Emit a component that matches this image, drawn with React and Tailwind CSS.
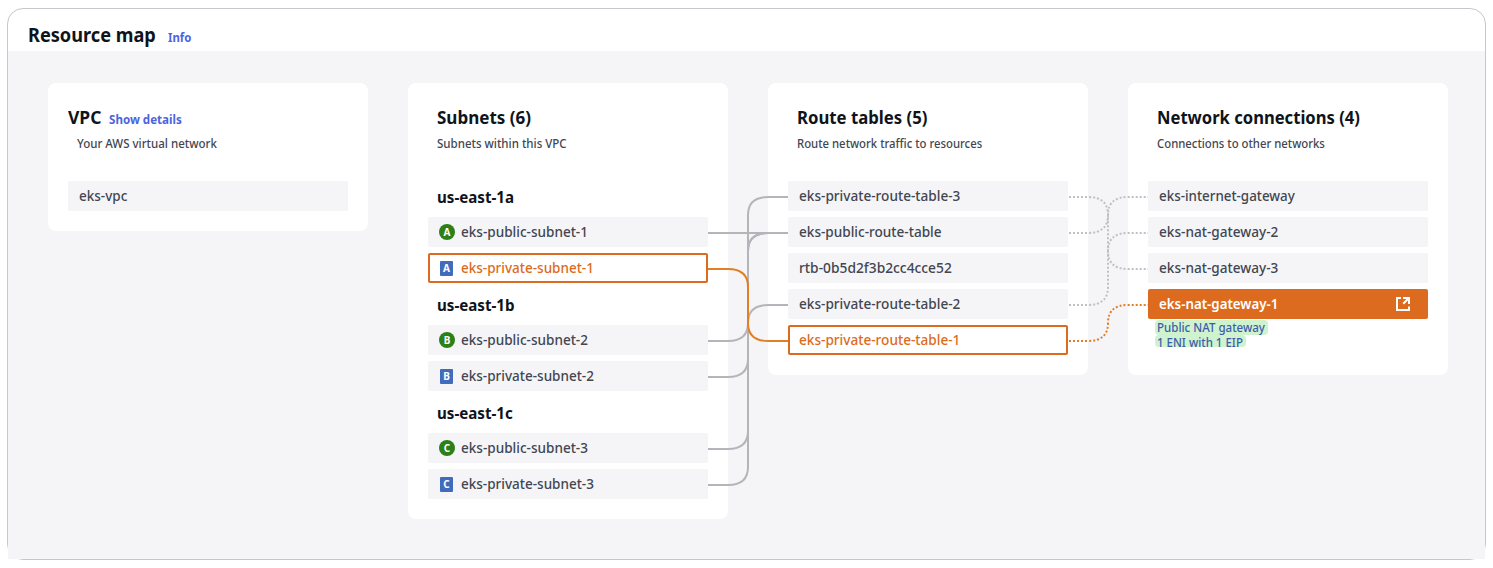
import React from "react";

const GRAY_TEXT = "text-[#424650]";

function Card({ className, title, titleClass, link, subtitle, subtitleClass, children }) {
  return (
    <section className={`w-80 shrink-0 rounded-lg bg-white px-5 pb-5 ${className || ""}`}>
      <div className={`h-[98px] pt-[22px] ${link ? "" : "pl-[9px]"}`}>
        <div className="flex h-6 items-baseline whitespace-nowrap">
          <h2 className={`origin-left text-lg leading-6 font-bold text-[#0f141a] ${titleClass}`}>{title}</h2>
          {link && (
            <a className="ml-[7px] origin-left scale-x-[.965] text-xs leading-4 font-bold text-[#4d63e0]">{link}</a>
          )}
        </div>
        <p className={`mt-[7px] w-max origin-left text-xs leading-4 font-medium whitespace-nowrap text-[#424650] ${link ? "ml-[9px]" : ""} ${subtitleClass}`}>
          {subtitle}
        </p>
      </div>
      {children}
    </section>
  );
}

function Row({ label, width, active, filled, badge, letter }) {
  const look = filled
    ? "bg-[#dc6b20] text-white font-semibold"
    : active
      ? "bg-white text-[#dc6b20] font-medium inset-ring-2 inset-ring-[#dc6b20]"
      : `bg-[#f5f5f8] font-medium ${GRAY_TEXT}`;
  return (
    <li className={`mb-[6px] flex h-[30px] items-center rounded-xs pr-[17px] pl-[11px] last:mb-0 ${look}`}>
      {badge && (
        <span className="mr-[6px] flex w-4 justify-center">
          <span
            className={
              badge === "public"
                ? "flex size-4 items-center justify-center rounded-full bg-[#2c8017] text-[10px] leading-none font-bold text-white"
                : "-ml-px flex h-[15px] w-[13px] items-center justify-center rounded-[1px] bg-[#416bbb] text-[10px] leading-none font-bold text-white"
            }
          >
            {letter}
          </span>
        </span>
      )}
      <span className={`origin-left text-sm leading-[30px] whitespace-nowrap ${width}`}>{label}</span>
      {filled && (
        <svg className="ml-auto size-4" viewBox="0 0 16 16" fill="none" stroke="currentColor" strokeWidth="2">
          <path d="M6 2H2v12h12v-3.4" />
          <path d="M8 2h6v6M14 2 8.2 7.8" />
        </svg>
      )}
    </li>
  );
}

function Zone({ name, letter, n, active }) {
  return (
    <>
      <h3 className="h-9 w-max origin-left scale-x-[.945] pl-[9.5px] text-base leading-8 font-bold text-[#0f141a]">{name}</h3>
      <ul className="mb-[6px] last:mb-0">
        <Row label={`eks-public-subnet-${n}`} width="scale-x-[.968]" badge="public" letter={letter} />
        <Row label={`eks-private-subnet-${n}`} width="scale-x-[.965]" badge="private" letter={letter} active={active} />
      </ul>
    </>
  );
}

// Draws an S-shaped connector between two rows, 80px apart
function link(x, from, to) {
  if (from === to) return `M${x} ${from}H${x + 80}`;
  const s = to > from ? 1 : -1;
  const m = x + 40;
  const r = 18;
  return `M${x} ${from}H${m - 20}Q${m} ${from} ${m} ${from + s * r}V${to - s * r}Q${m} ${to} ${m + 20} ${to}H${x + 80}`;
}

const solid = [[233, 233], [341, 233], [377, 305], [449, 233], [485, 197]];
const dotted = [[197, 269], [233, 197], [305, 233]];

export default function App() {
  return (
    <div className="h-[568px] bg-white px-[7px] pt-2 font-['Noto_Sans',sans-serif]">
      <div className="relative h-[552px] rounded-2xl border border-[#c6c6cd]">
        <header className="flex h-[42px] items-baseline pt-[12px] pl-5">
          <h1 className="w-[139.5px] origin-left scale-x-[.908] text-xl leading-7 font-bold whitespace-nowrap text-[#0f141a]">Resource map</h1>
          <a className="origin-left scale-x-[.95] text-xs leading-4 font-bold text-[#4d63e0]">Info</a>
        </header>
        <main className="flex h-[508px] items-start gap-10 bg-[#f5f5f8] px-10 pt-8">
          <Card title="VPC" titleClass="scale-x-[.97]" link="Show details" subtitle="Your AWS virtual network" subtitleClass="scale-x-[.96]">
            <ul>
              <Row label="eks-vpc" width="scale-x-[.965]" />
            </ul>
          </Card>
          <Card title="Subnets (6)" titleClass="scale-x-[.945]" subtitle="Subnets within this VPC" subtitleClass="scale-x-[.96]">
            <Zone name="us-east-1a" letter="A" n="1" active />
            <Zone name="us-east-1b" letter="B" n="2" />
            <Zone name="us-east-1c" letter="C" n="3" />
          </Card>
          <Card className="h-[292px]" title="Route tables (5)" titleClass="scale-x-[.93]" subtitle="Route network traffic to resources" subtitleClass="scale-x-[.945]">
            <ul>
              <Row label="eks-private-route-table-3" width="scale-x-[.972]" />
              <Row label="eks-public-route-table" width="scale-x-[.97]" />
              <Row label="rtb-0b5d2f3b2cc4cce52" width="scale-x-[.985]" />
              <Row label="eks-private-route-table-2" width="scale-x-[.972]" />
              <Row label="eks-private-route-table-1" width="scale-x-[.972]" active />
            </ul>
          </Card>
          <Card className="h-[292px]" title="Network connections (4)" titleClass="scale-x-[.922]" subtitle="Connections to other networks" subtitleClass="scale-x-[.945]">
            <ul>
              <Row label="eks-internet-gateway" width="scale-x-[.955]" />
              <Row label="eks-nat-gateway-2" width="scale-x-[.972]" />
              <Row label="eks-nat-gateway-3" width="scale-x-[.972]" />
              <Row label="eks-nat-gateway-1" width="scale-x-[.95]" filled />
            </ul>
            <div className="flex flex-col items-start pt-[1px] pl-[7px] text-xs font-medium text-[#3c5cab]">
              <div className="h-[15px] w-[113px] rounded-[4px] bg-[#cff3cf] pl-[2px]">
                <span className="inline-block origin-left scale-x-[.96] leading-[14px] whitespace-nowrap">Public NAT gateway</span>
              </div>
              <div className="h-[12px] w-[91px] rounded-[4px] bg-[#cff3cf] pl-[2px]">
                <span className="inline-block origin-left scale-x-[.957] leading-[14px] whitespace-nowrap">1 ENI with 1 EIP</span>
              </div>
            </div>
          </Card>
        </main>
        <svg className="pointer-events-none absolute -top-[9px] -left-2" width="1493" height="568" fill="none" strokeWidth="2">
          {solid.map(([a, b]) => (
            <path key={`${a}-${b}`} d={link(708, a, b)} stroke="#b4b4bb" />
          ))}
          <path d={link(708, 269, 341)} stroke="#e07f24" />
          {dotted.map(([a, b]) => (
            <path key={`${a}-${b}`} d={link(1068, a, b)} stroke="#bfbfc6" strokeDasharray="2 2" strokeDashoffset="-1" />
          ))}
          <path d={link(1068, 341, 305)} stroke="#e07f24" strokeDasharray="2 2" strokeDashoffset="-1" />
        </svg>
      </div>
    </div>
  );
}
